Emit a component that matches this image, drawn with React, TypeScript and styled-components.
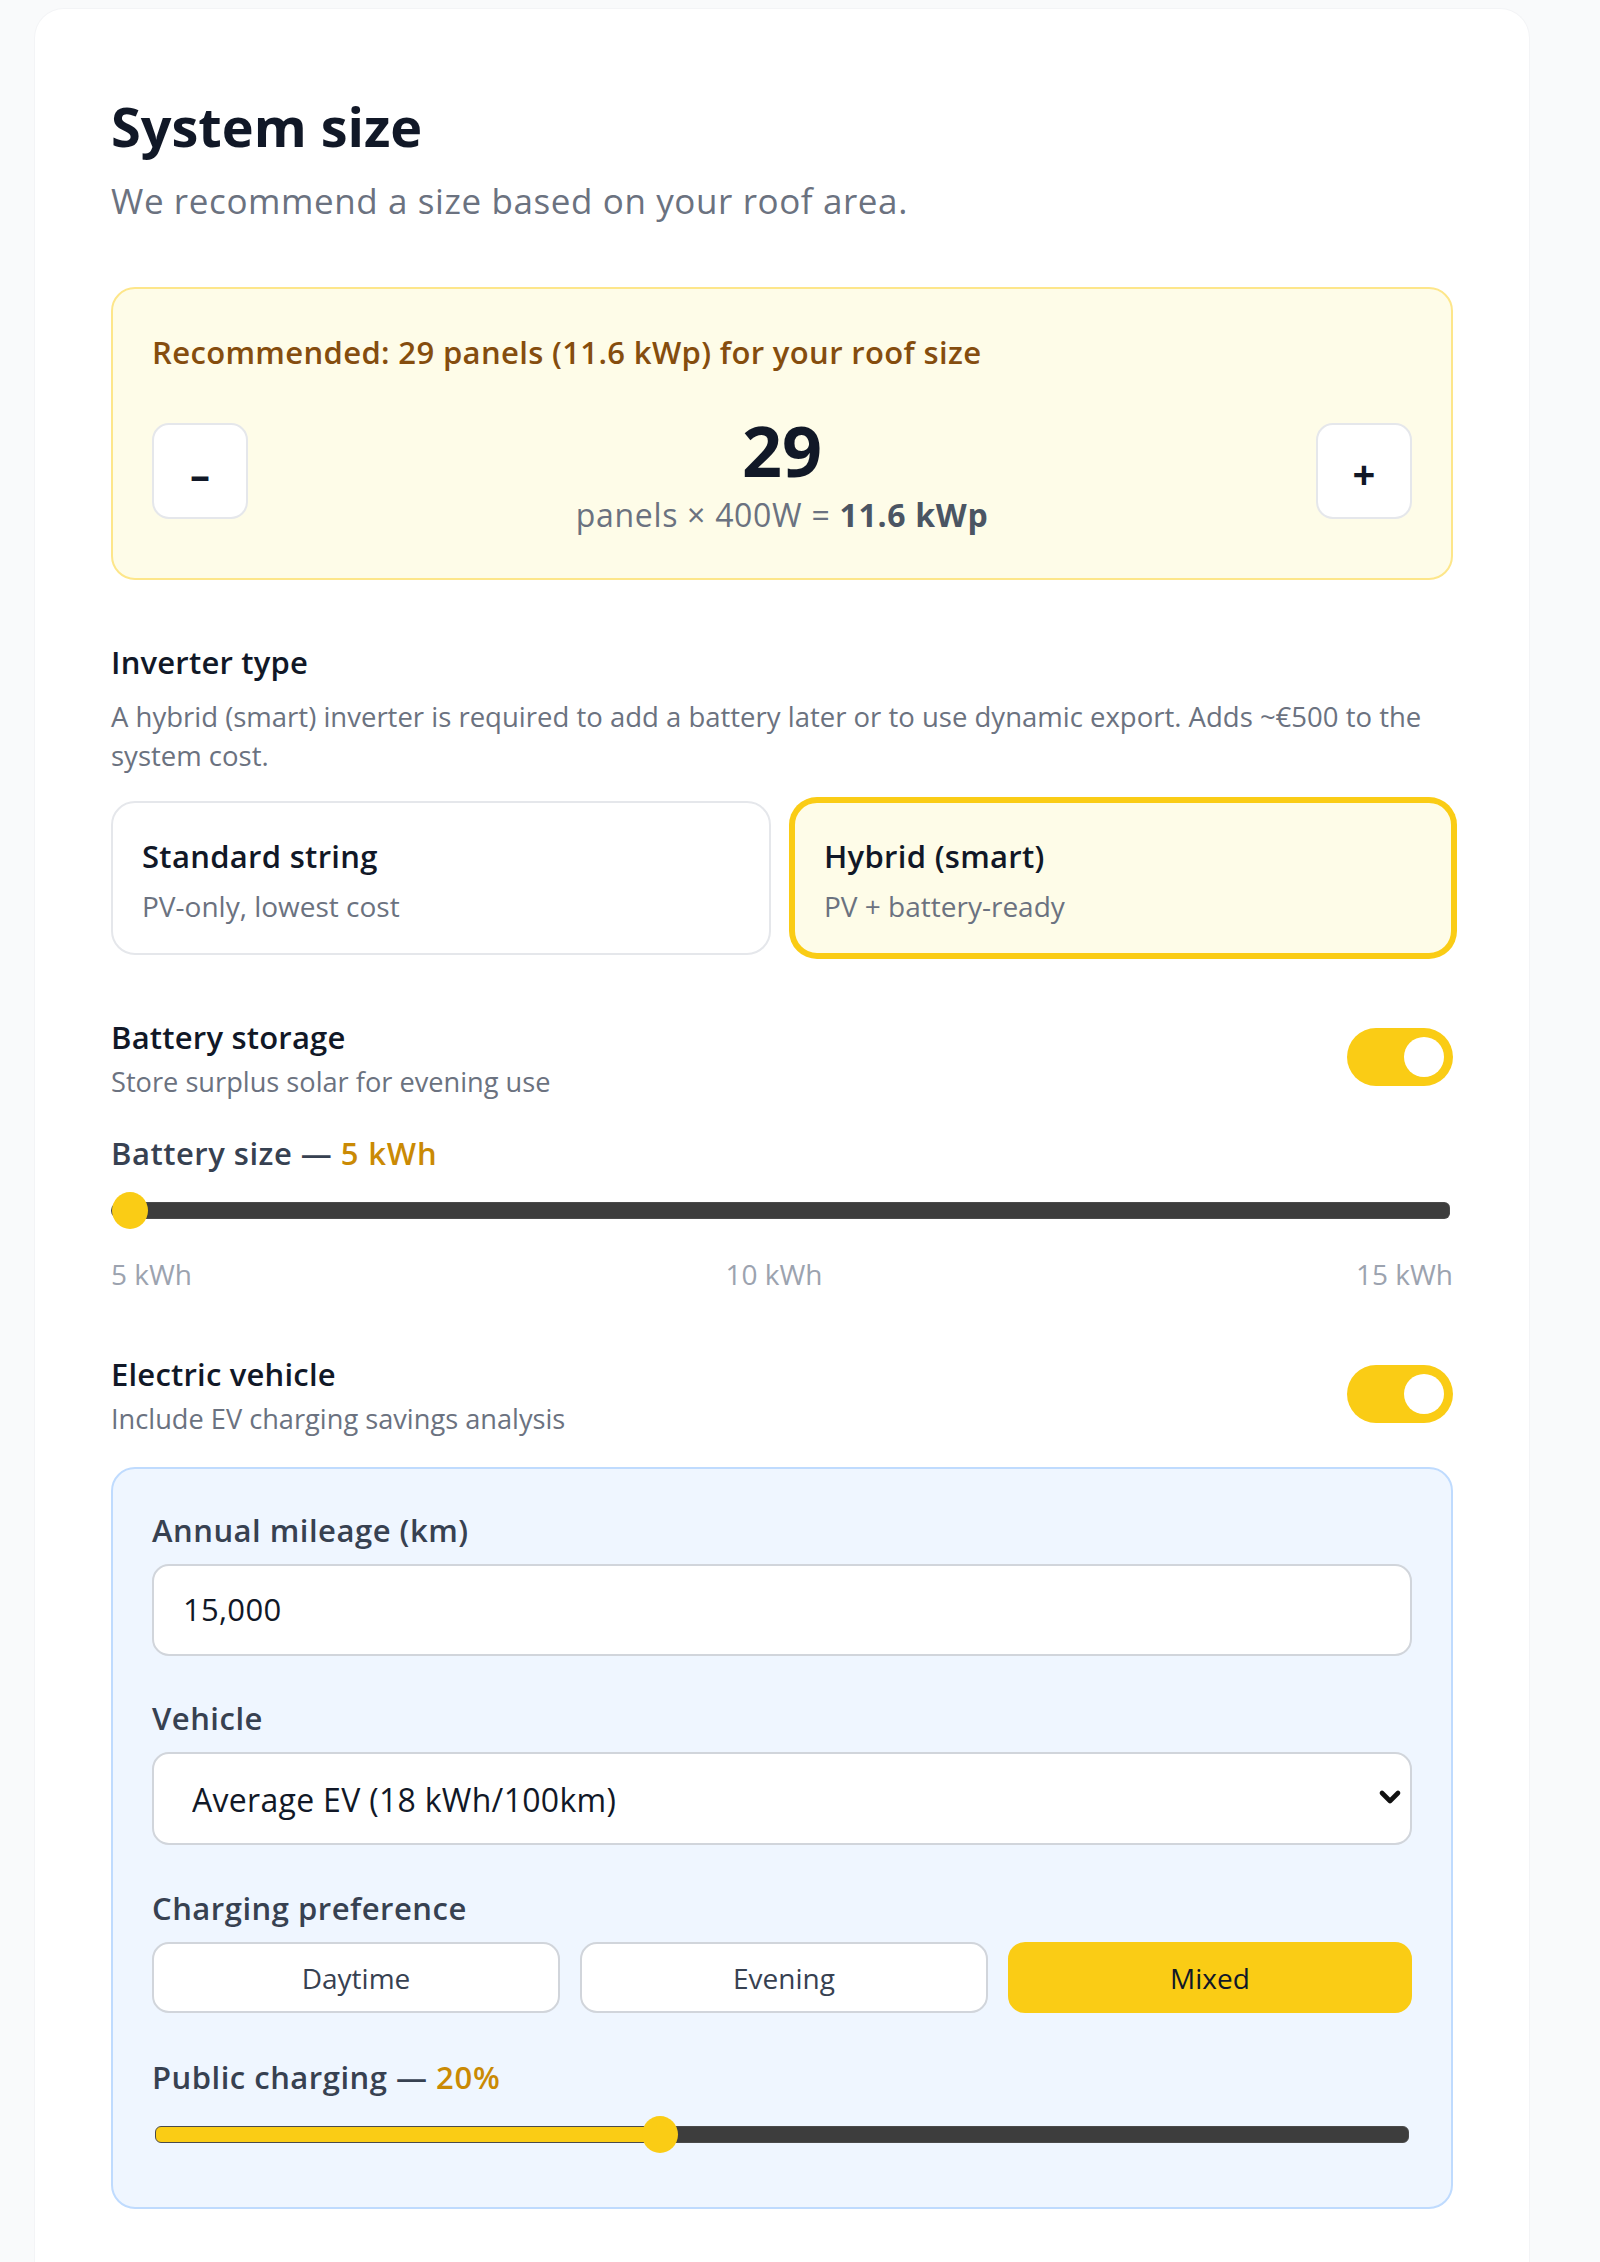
import React from "react";
import styled, { createGlobalStyle } from "styled-components";
import { ChevronDown } from "lucide-react";

const Global = createGlobalStyle`
  html, body { margin: 0; padding: 0; height: 2262px; overflow: hidden; background: #f9fafb; }
  * { box-sizing: border-box; }
  body { font-family: "Open Sans", "Noto Sans", sans-serif; color: #111827; }
`;

const Page = styled.div`
  height: 2262px;
  overflow: hidden;
  padding: 8px 70px 0 34px;
`;

const Card = styled.section`
  background: #fff;
  border: 1px solid #f3f4f6;
  border-bottom: 0;
  border-radius: 30px 30px 0 0;
  height: 2300px;
  padding: 82px 76px 0;
`;

const Title = styled.h2`
  margin: 0;
  font-size: 54px;
  line-height: 70px;
  font-weight: 700;
  color: #111827;
`;

const Subtitle = styled.p`
  margin: 18px 0 0;
  font-size: 35px;
  line-height: 44px;
  color: #6b7280;
  letter-spacing: 0.6px;
`;

const RecBox = styled.div`
  margin-top: 64px;
  height: 293px;
  background: #fefce8;
  border: 2px solid #fde68a;
  border-radius: 24px;
  padding: 0 39px;
`;

const RecText = styled.p`
  margin: 43px 0 0;
  font-size: 31px;
  line-height: 40px;
  font-weight: 600;
  color: #854d0e;
  letter-spacing: 0.36px;
`;

const Stepper = styled.div`
  margin-top: 35px;
  display: flex;
  align-items: center;
  justify-content: space-between;
`;

const StepButton = styled.button`
  width: 96px;
  height: 96px;
  background: #fff;
  border: 2px solid #e5e7eb;
  border-radius: 17px;
  font-family: inherit;
  font-size: 40px;
  font-weight: 700;
  line-height: 1;
  color: #111827;
  padding: 6px 0 0;
`;

const Count = styled.div`
  text-align: center;
  margin-top: 4px;
`;

const CountValue = styled.div`
  font-size: 70px;
  line-height: 78px;
  margin-bottom: 6px;
  font-weight: 700;
  color: #111827;
`;

const CountNote = styled.div`
  font-size: 32px;
  line-height: 40px;
  color: #6b7280;
  letter-spacing: 0.7px;
  strong {
    font-weight: 700;
    color: #4b5563;
  }
`;

const SectionLabel = styled.div`
  font-size: 31px;
  line-height: 40px;
  font-weight: 600;
  color: #111827;
  letter-spacing: 0.2px;
`;

const InverterLabel = styled(SectionLabel)`
  margin-top: 62px;
`;

const Help = styled.p`
  margin: 15px 0 0;
  font-size: 27.5px;
  line-height: 39px;
  color: #6b7280;
`;

const OptionGrid = styled.div`
  margin-top: 26px;
  display: grid;
  grid-template-columns: 1fr 1fr;
  gap: 22px;
`;

const Option = styled.div<{ $active?: boolean }>`
  height: 154px;
  padding: 0 29px;
  border-radius: 24px;
  border: 2px solid ${(p) => (p.$active ? "#facc15" : "#e5e7eb")};
  background: ${(p) => (p.$active ? "#fefce8" : "#fff")};
  box-shadow: ${(p) => (p.$active ? "0 0 0 4px #facc15" : "none")};
`;

const OptionTitle = styled.div`
  margin-top: 31px;
  font-size: 31px;
  line-height: 44px;
  font-weight: 600;
  color: #111827;
  letter-spacing: 0.3px;
`;

const OptionSub = styled.div`
  margin-top: 9px;
  font-size: 28px;
  line-height: 38px;
  color: #6b7280;
`;

const ToggleRow = styled.div<{ $top: number }>`
  margin-top: ${(p) => p.$top}px;
  display: flex;
  justify-content: space-between;
  align-items: flex-start;
`;

const ToggleText = styled.div``;

const ToggleSub = styled.div`
  margin-top: 6px;
  font-size: 27.2px;
  line-height: 38px;
  color: #6b7280;
`;

const Toggle = styled.div`
  width: 106px;
  height: 58px;
  margin-top: 11px;
  background: #facc15;
  border-radius: 29px;
  display: flex;
  align-items: center;
  justify-content: flex-end;
  padding-right: 9px;
`;

const Knob = styled.span`
  width: 40px;
  height: 40px;
  border-radius: 50%;
  background: #fff;
`;

const FieldLabel = styled.div<{ $top?: number }>`
  margin-top: ${(p) => p.$top ?? 0}px;
  font-size: 31px;
  line-height: 40px;
  font-weight: 600;
  color: #374151;
  letter-spacing: 0.5px;
`;

const Accent = styled.span`
  color: #ca8a04;
  letter-spacing: 0.8px;
`;

const Range = styled.input.attrs({ type: "range" })`
  -webkit-appearance: none;
  appearance: none;
  display: block;
  height: 37px;
  background: transparent;
  &::-webkit-slider-runnable-track {
    box-sizing: border-box;
    height: 17px;
    border: 1.5px solid #4a4a4a;
    border-radius: 6px;
    background: linear-gradient(to right, #facc15 var(--fill), #3d3d3d var(--fill));
  }
  &::-webkit-slider-thumb {
    -webkit-appearance: none;
    width: 36px;
    height: 37px;
    margin-top: -11.5px;
    border-radius: 50%;
    background: #facc15;
    border: 0;
  }
`;

const BatteryRange = styled(Range)`
  width: calc(100% - 3px);
  margin: 19px 0 0 0;
  &::-webkit-slider-runnable-track {
    border-radius: 9px 6px 6px 9px;
    border-left-color: transparent;
  }
`;

const Scale = styled.div`
  margin-top: 26px;
  display: flex;
  justify-content: space-between;
  font-size: 28px;
  line-height: 38px;
  color: #9ca3af;
`;

const EvBox = styled.div`
  margin-top: 29px;
  height: 742px;
  padding: 41px 39px 0;
  background: #eff6ff;
  border: 2px solid #bfdbfe;
  border-radius: 24px;
`;

const TextInput = styled.input`
  display: block;
  width: 100%;
  height: 92px;
  margin-top: 14px;
  padding: 0 29px 2px;
  background: #fff;
  border: 2px solid #d1d5db;
  border-radius: 17px;
  font-family: inherit;
  font-size: 31px;
  color: #111827;
  letter-spacing: 0.3px;
`;

const SelectWrap = styled.div`
  position: relative;
  margin-top: 14px;
`;

const Select = styled.select`
  display: block;
  width: 100%;
  height: 93px;
  padding: 2px 38px 0;
  appearance: none;
  background: #fff;
  border: 2px solid #d1d5db;
  border-radius: 17px;
  font-family: inherit;
  font-size: 32px;
  color: #111827;
  letter-spacing: 0.3px;
`;

const Chevron = styled(ChevronDown)`
  position: absolute;
  right: 6px;
  top: 29px;
  width: 32px;
  height: 32px;
  color: #111;
  pointer-events: none;
`;

const PillRow = styled.div`
  margin-top: 14px;
  display: grid;
  grid-template-columns: 1fr 1fr 404px;
  gap: 20px;
`;

const Pill = styled.button<{ $active?: boolean }>`
  height: 71px;
  border-radius: 17px;
  border: 2px solid ${(p) => (p.$active ? "#facc15" : "#d1d5db")};
  background: ${(p) => (p.$active ? "#facc15" : "#fff")};
  color: ${(p) => (p.$active ? "#111827" : "#374151")};
  font-family: inherit;
  font-size: 28px;
  font-weight: 500;
  padding: 0;
`;

const PublicRange = styled(Range)`
  width: calc(100% - 6px);
  margin: 19px 0 0 3px;
`;

export default function App() {
  return (
    <>
      <Global />
      <Page>
        <Card>
          <Title>System size</Title>
          <Subtitle>We recommend a size based on your roof area.</Subtitle>

          <RecBox>
            <RecText>Recommended: 29 panels (11.6 kWp) for your roof size</RecText>
            <Stepper>
              <StepButton>–</StepButton>
              <Count>
                <CountValue>29</CountValue>
                <CountNote>
                  panels × 400W = <strong>11.6 kWp</strong>
                </CountNote>
              </Count>
              <StepButton>+</StepButton>
            </Stepper>
          </RecBox>

          <InverterLabel>Inverter type</InverterLabel>
          <Help>
            A hybrid (smart) inverter is required to add a battery later or to use dynamic export. Adds ~€500 to the
            system cost.
          </Help>
          <OptionGrid>
            <Option>
              <OptionTitle>Standard string</OptionTitle>
              <OptionSub>PV-only, lowest cost</OptionSub>
            </Option>
            <Option $active>
              <OptionTitle>Hybrid (smart)</OptionTitle>
              <OptionSub>PV + battery-ready</OptionSub>
            </Option>
          </OptionGrid>

          <ToggleRow $top={62}>
            <ToggleText>
              <SectionLabel>Battery storage</SectionLabel>
              <ToggleSub>Store surplus solar for evening use</ToggleSub>
            </ToggleText>
            <Toggle>
              <Knob />
            </Toggle>
          </ToggleRow>

          <FieldLabel $top={32}>
            Battery size — <Accent>5 kWh</Accent>
          </FieldLabel>
          <BatteryRange min={5} max={15} defaultValue={5} style={{ "--fill": "0%" } as React.CSSProperties} />
          <Scale>
            <span>5 kWh</span>
            <span>10 kWh</span>
            <span>15 kWh</span>
          </Scale>

          <ToggleRow $top={61}>
            <ToggleText>
              <SectionLabel>Electric vehicle</SectionLabel>
              <ToggleSub>Include EV charging savings analysis</ToggleSub>
            </ToggleText>
            <Toggle>
              <Knob />
            </Toggle>
          </ToggleRow>

          <EvBox>
            <FieldLabel>Annual mileage (km)</FieldLabel>
            <TextInput defaultValue="15,000" />
            <FieldLabel $top={42}>Vehicle</FieldLabel>
            <SelectWrap>
              <Select defaultValue="avg">
                <option value="avg">Average EV (18 kWh/100km)</option>
              </Select>
              <Chevron strokeWidth={3.5} />
            </SelectWrap>
            <FieldLabel $top={43}>Charging preference</FieldLabel>
            <PillRow>
              <Pill>Daytime</Pill>
              <Pill>Evening</Pill>
              <Pill $active>Mixed</Pill>
            </PillRow>
            <FieldLabel $top={44}>
              Public charging — <Accent>20%</Accent>
            </FieldLabel>
            <PublicRange min={0} max={50} defaultValue={20} style={{ "--fill": "41%" } as React.CSSProperties} />
          </EvBox>
        </Card>
      </Page>
    </>
  );
}
